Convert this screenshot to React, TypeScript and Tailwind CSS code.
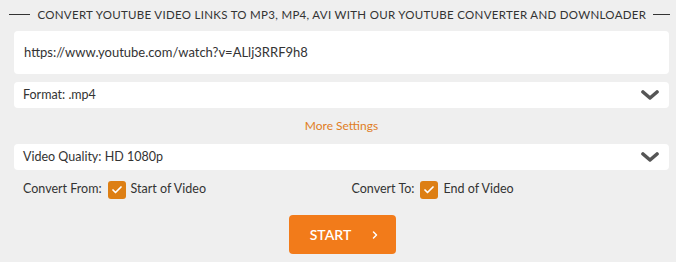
import { Check, ChevronRight } from 'lucide-react'

// Converter form: link input, two selects, range checkboxes and a start button.
export default function App() {
  return (
    <div className="h-[262px] w-[676px] overflow-hidden bg-[#efefef] font-['Lato',sans-serif] text-[#333]">
      <div className="flex items-center gap-[7px] pl-[9px] pr-[6px] pt-[6px] text-[11.5px] uppercase tracking-[0.3px] text-[#333]">
        <span className="h-px w-[23px] bg-[#333]" />
        <span className="whitespace-nowrap">Convert YouTube video links to MP3, MP4, AVI with our YouTube converter and downloader</span>
        <span className="h-px w-[18px] bg-[#333]" />
      </div>

      <div className="flex flex-col px-[14px] pr-[7px]">
        <div className="mt-[8px] flex h-[43px] items-center rounded-[4px] bg-white px-[10px] text-[13px] text-[#333]">
          https://www.youtube.com/watch?v=ALlj3RRF9h8
        </div>

        <Select label="Format: .mp4" className="mt-[8px]" />

        <div className="mt-[9px] text-center text-[12px] text-[#e07d1e]">More Settings</div>

        <Select label="Video Quality: HD 1080p" className="mt-[9px]" />

        <div className="mt-[10px] grid grid-cols-2 text-[12.5px]">
          <Option label="Convert From:" value="Start of Video" className="pl-[9px]" />
          <Option label="Convert To:" value="End of Video" className="pl-[10px]" />
        </div>

        <div className="mt-[16px] flex justify-center pl-[2px]">
          <button className="flex h-[39px] w-[107px] items-center justify-center gap-[18px] rounded-[4px] bg-[#f27b1a] pl-[6px] text-[14px] font-semibold text-white">
            START
            <ChevronRight size={12} strokeWidth={3} />
          </button>
        </div>

        <div className="mt-[6px] text-center text-[12px] text-[#555]">
          By using our service you are accepting our <span className="text-[#d33]">terms of use</span>.
        </div>
      </div>
    </div>
  )
}

function Select({ label, className }: { label: string; className?: string }) {
  return (
    <div className={`flex h-[26px] items-center justify-between rounded-[4px] bg-white pl-[9px] pr-[10px] text-[12.5px] text-[#333] ${className ?? ''}`}>
      <span>{label}</span>
      <svg width="18" height="12" viewBox="0 0 18 12" className="text-[#555]">
        <path d="M2 3 L9 9 L16 3" fill="none" stroke="currentColor" strokeWidth="3.6" strokeLinecap="round" strokeLinejoin="round" />
      </svg>
    </div>
  )
}

function Option({ label, value, className }: { label: string; value: string; className?: string }) {
  return (
    <div className={`flex items-center ${className ?? ''}`}>
      <span>{label}</span>
      <span className="ml-[6px] flex h-[18px] w-[18px] items-center justify-center rounded-[3px] bg-[#dd7f14] text-white">
        <Check size={12} strokeWidth={3.5} />
      </span>
      <span className="ml-[5px]">{value}</span>
    </div>
  )
}
